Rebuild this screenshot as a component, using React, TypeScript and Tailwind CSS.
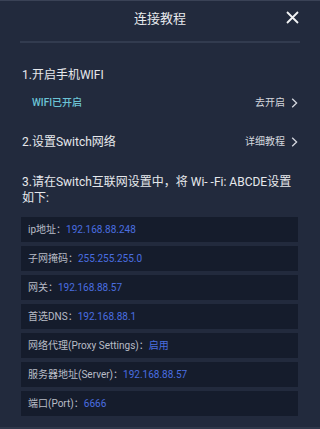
import React from "react";

const rows: [string, string][] = [
  ["ip地址：", "192.168.88.248"],
  ["子网掩码：", "255.255.255.0"],
  ["网关：", "192.168.88.57"],
  ["首选DNS：", "192.168.88.1"],
  ["网络代理(Proxy Settings)：", "启用"],
  ["服务器地址(Server)：", "192.168.88.57"],
  ["端口(Port)：", "6666"],
];

function Chevron() {
  return (
    <svg width="7" height="10" viewBox="0 0 7 10" className="ml-[6px]">
      <path d="M1.2 0.8 L5.6 5 L1.2 9.2" fill="none" stroke="#d4d7de" strokeWidth="1.3" />
    </svg>
  );
}

export default function App() {
  return (
    <div
      className="w-[320px] h-[429px] bg-[#222a3d] flex flex-col overflow-hidden border-t border-[#3a4256] border-b-2 border-b-[#2f374a]"
      style={{ fontFamily: '"Roboto", "Noto Sans CJK SC", sans-serif' }}
    >
      <div className="relative h-[40px] flex items-center justify-center">
        <span className="text-[13px] text-[#e8eaee] leading-none mt-[-6px]">连接教程</span>
        <svg
          width="13"
          height="13"
          viewBox="0 0 13 13"
          className="absolute left-[286px] top-[10px]"
        >
          <path d="M1 1 L12 12 M12 1 L1 12" stroke="#f2f3f5" strokeWidth="1.8" fill="none" />
        </svg>
      </div>
      <div className="mx-5 h-[2px] bg-[#323b4f]" />
      <div className="pl-[21px] pr-[22px] flex flex-col">
        <div className="mt-[24px] pl-px text-[12px] leading-[16px] text-[#e6e8ec]">1.开启手机WIFI</div>
        <div className="mt-[12px] flex items-center justify-between pl-[11px]">
          <span className="text-[10px] leading-[16px] text-[#6cc4d6] font-medium">WIFI已开启</span>
          <span className="flex items-center text-[10px] leading-[16px] text-[#d4d7de]">
            去开启
            <Chevron />
          </span>
        </div>
        <div className="mt-[23px] flex items-center justify-between pl-px">
          <span className="text-[12px] leading-[16px] text-[#e6e8ec]">2.设置Switch网络</span>
          <span className="flex items-center text-[10px] leading-[16px] text-[#d4d7de]">
            详细教程
            <Chevron />
          </span>
        </div>
        <div className="mt-[24px] pl-px text-[12px] leading-[16px] text-[#e6e8ec]">
          3.请在Switch互联网设置中，将 Wi- -Fi: ABCDE设置如下:
        </div>
        <div className="mt-[11px] flex flex-col gap-[4px]">
          {rows.map(([k, v]) => (
            <div key={k} className="h-[25px] bg-[#151c2c] flex items-center pl-[7px] text-[10px]">
              <span className="text-[#b9bdc7]">{k}</span>
              <span className="text-[#4a6ee0]">{v}</span>
            </div>
          ))}
        </div>
      </div>
    </div>
  );
}
